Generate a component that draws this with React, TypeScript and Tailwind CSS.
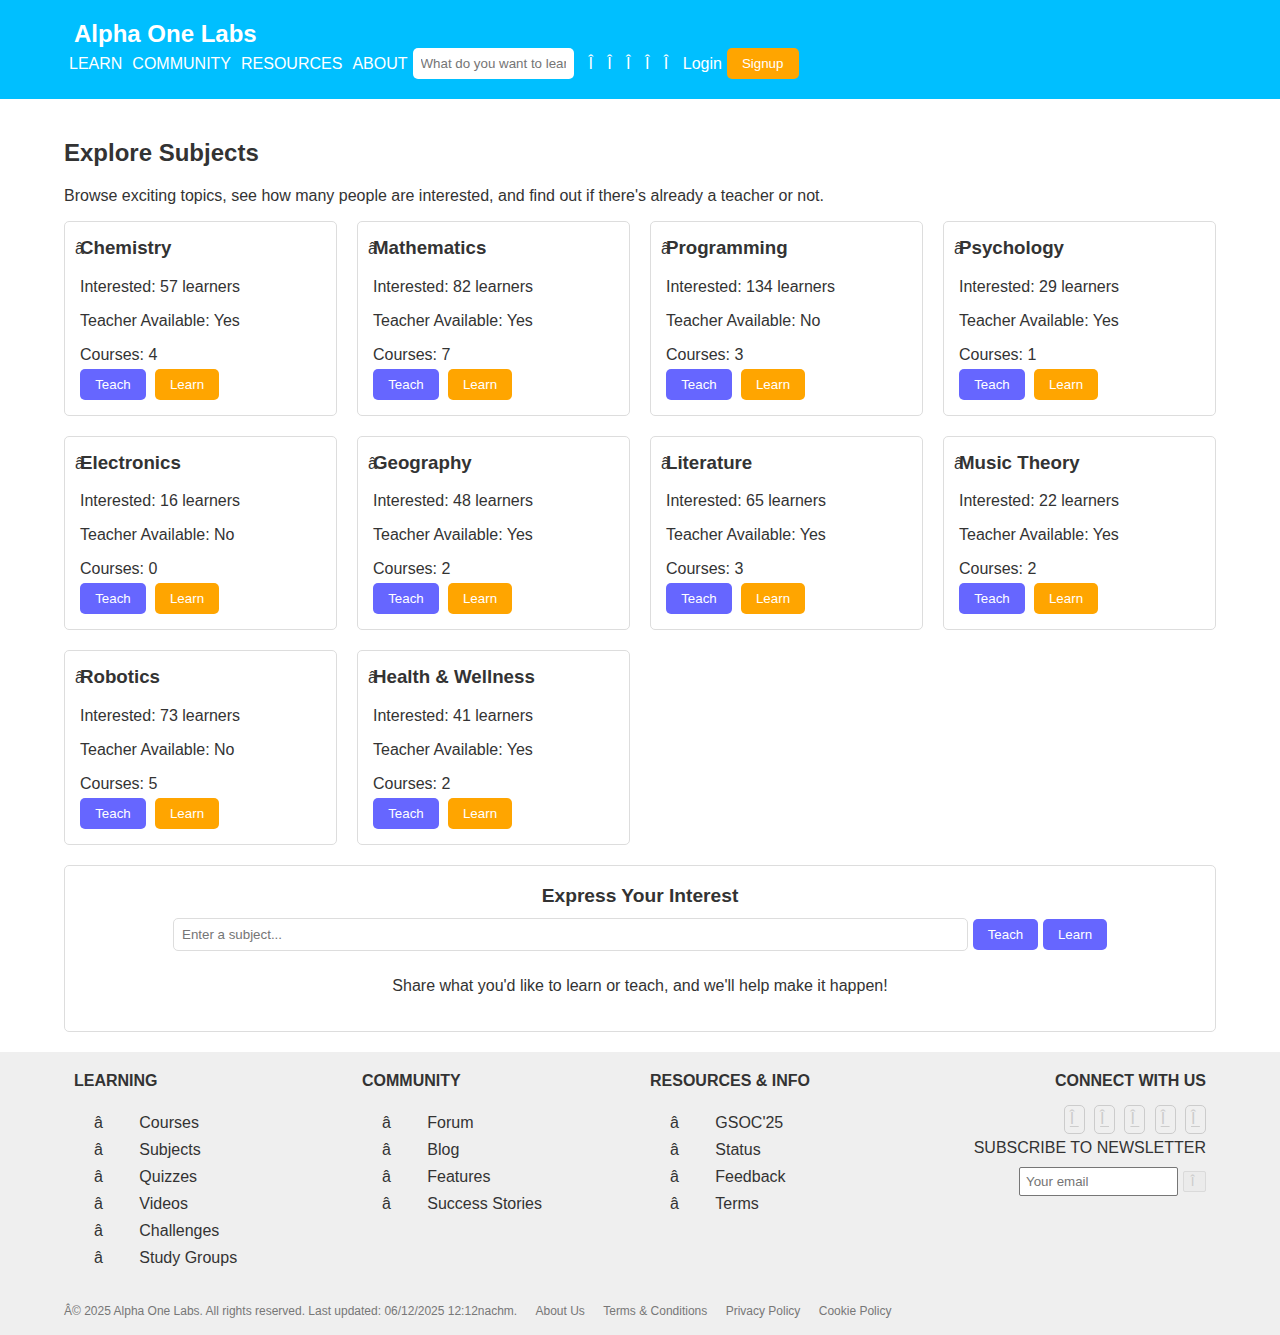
import React from "react";

const subjects = [
  { name: "Chemistry", learners: 57, teacher: "Yes", courses: 4 },
  { name: "Mathematics", learners: 82, teacher: "Yes", courses: 7 },
  { name: "Programming", learners: 134, teacher: "No", courses: 3 },
  { name: "Psychology", learners: 29, teacher: "Yes", courses: 1 },
  { name: "Electronics", learners: 16, teacher: "No", courses: 0 },
  { name: "Geography", learners: 48, teacher: "Yes", courses: 2 },
  { name: "Literature", learners: 65, teacher: "Yes", courses: 3 },
  { name: "Music Theory", learners: 22, teacher: "Yes", courses: 2 },
  { name: "Robotics", learners: 73, teacher: "No", courses: 5 },
  { name: "Health & Wellness", learners: 41, teacher: "Yes", courses: 2 },
];

const columns = [
  {
    title: "LEARNING",
    links: ["Courses", "Subjects", "Quizzes", "Videos", "Challenges", "Study Groups"],
  },
  { title: "COMMUNITY", links: ["Forum", "Blog", "Features", "Success Stories"] },
  { title: "RESOURCES & INFO", links: ["GSOC'25", "Status", "Feedback", "Terms"] },
];

const icons = [0, 1, 2, 3, 4];

function Button({ label, tone, width }: { label: string; tone: "violet" | "orange"; width: string }) {
  return (
    <button
      className={`h-[31px] shrink-0 rounded-[5px] text-center text-[13.333px] leading-[15px] text-white ${width} ${
        tone === "violet" ? "bg-[#6666ff]" : "bg-[#ffa500]"
      }`}
    >
      {label}
    </button>
  );
}

function Header() {
  return (
    <header className="h-[99px] bg-[#00bfff] px-16 pt-5 text-white">
      <div className="pl-[10px] text-2xl leading-7 font-bold">Alpha One Labs</div>
      <nav className="flex h-[31px] items-center pl-[5px] whitespace-nowrap">
        <div className="flex gap-[10px]">
          <a>LEARN</a>
          <a>COMMUNITY</a>
          <a>RESOURCES</a>
          <a>ABOUT</a>
        </div>
        <input
          className="ml-[5px] h-[31px] w-[161px] rounded-[5px] bg-white px-2 text-[13.333px] placeholder:text-[#757575]"
          placeholder="What do you want to learn?"
        />
        <div className="ml-[14.9px] flex gap-[14.4px]">
          {icons.map((i) => (
            <span key={i}>Î</span>
          ))}
        </div>
        <a className="mr-[4.7px] ml-[14.6px]">Login</a>
        <Button label="Signup" tone="orange" width="w-[72px]" />
      </nav>
    </header>
  );
}

function SubjectCard({ subject }: { subject: (typeof subjects)[number] }) {
  return (
    <article className="relative h-[194.5px] rounded-[5px] border border-[#dddddd] p-[15px]">
      <span className="absolute top-[18px] left-[10px]">â</span>
      <h3 className="relative mb-[19.7px] text-[18.72px] leading-[21px] font-bold">{subject.name}</h3>
      <div className="flex flex-col gap-4">
        <p>Interested: {subject.learners} learners</p>
        <p>Teacher Available: {subject.teacher}</p>
        <p>Courses: {subject.courses}</p>
      </div>
      <div className="mt-[5px] flex gap-[9px]">
        <Button label="Teach" tone="violet" width="w-[66px]" />
        <Button label="Learn" tone="orange" width="w-[64px]" />
      </div>
    </article>
  );
}

function Footer() {
  return (
    <footer className="h-[283px] bg-[#efefef] px-16 pt-5">
      <div className="grid h-[231px] grid-cols-4">
        {columns.map((c) => (
          <section key={c.title} className="px-[10px]">
            <h4 className="font-bold">{c.title}</h4>
            <ul className="mt-[19px] pl-5">
              {c.links.map((l) => (
                <li key={l} className="flex h-[27px] items-center">
                  <span className="w-[45.3px]">â</span>
                  <a>{l}</a>
                </li>
              ))}
            </ul>
          </section>
        ))}
        <section className="flex flex-col items-end px-[10px]">
          <h4 className="font-bold">CONNECT WITH US</h4>
          <div className="mt-[15px] flex gap-[9.3px] text-[#cccccc]">
            {icons.map((i) => (
              <a
                key={i}
                className="h-[29px] w-[21px] rounded-[5px] border border-[#cccccc] pt-[4px] pl-[5px] whitespace-pre underline underline-offset-2"
              >
                {"Î "}
              </a>
            ))}
          </div>
          <p className="mt-[5px]">SUBSCRIBE TO NEWSLETTER</p>
          <div className="mt-[10px] flex items-center gap-[5px]">
            <input
              className="h-[29px] w-[159px] rounded-[2px] border border-[#767676] bg-white px-[6px] text-[13.333px] placeholder:text-[#757575]"
              placeholder="Your email"
            />
            <button className="h-[21px] w-[23px] rounded-[2px] border border-[#dadada] bg-[#ebebeb] pr-[4px] text-[13.333px] leading-[17px] text-[#cccccc]">
              Î
            </button>
          </div>
        </section>
      </div>
      <div className="flex text-xs leading-4 whitespace-nowrap text-[#777777]">
        <span>Â© 2025 Alpha One Labs. All rights reserved. Last updated: 06/12/2025 12:12nachm.</span>
        <div className="ml-[18.3px] flex gap-[18.4px]">
          <a>About Us</a>
          <a>Terms &amp; Conditions</a>
          <a>Privacy Policy</a>
          <a>Cookie Policy</a>
        </div>
      </div>
    </footer>
  );
}

export default function App() {
  return (
    <div className="h-[1335px] overflow-hidden bg-white font-['Liberation_Sans',Arial,sans-serif] text-base leading-[18px] text-[#333333]">
      <Header />
      <main className="h-[953px] px-16 pt-10">
        <h2 className="text-2xl leading-7 font-bold">Explore Subjects</h2>
        <p className="mt-5 mb-4">
          Browse exciting topics, see how many people are interested, and find out if there's already a teacher or not.
        </p>
        <div className="grid grid-cols-4 gap-5">
          {subjects.map((s) => (
            <SubjectCard key={s.name} subject={s} />
          ))}
        </div>
        <section className="mt-5 flex h-[167px] flex-col items-center rounded-[5px] border border-[#dddddd] pt-[19px]">
          <h3 className="text-[19.2px] leading-[22px] font-bold">Express Your Interest</h3>
          <div className="mt-[11px] flex items-center gap-[5px]">
            <input
              className="h-[33px] w-[795px] rounded-[5px] border border-[#dddddd] px-2 text-[13.333px] placeholder:text-[#757575]"
              placeholder="Enter a subject..."
            />
            <Button label="Teach" tone="violet" width="w-[65px]" />
            <Button label="Learn" tone="violet" width="w-[64px]" />
          </div>
          <p className="mt-[26px]">Share what you'd like to learn or teach, and we'll help make it happen!</p>
        </section>
      </main>
      <Footer />
    </div>
  );
}
